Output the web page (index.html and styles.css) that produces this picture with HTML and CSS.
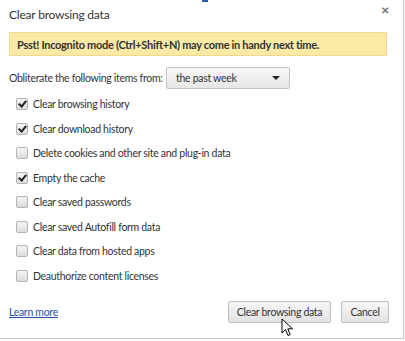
FILE: index.html
```html
<!DOCTYPE html>
<html>
<head>
<meta charset="utf-8">
<link rel="stylesheet" href="styles.css">
</head>
<body>
<div class="topmark"></div>
<div class="dialog">
  <div class="header">
    <span class="title">Clear browsing data</span>
    <span class="close">&#x2715;</span>
  </div>
  <div class="banner">Psst! Incognito mode (Ctrl+Shift+N) may come in handy next time.</div>
  <div class="period">
    <span class="period-label">Obliterate the following items from:</span>
    <div class="select"><span>the past week</span><span class="arrow"></span></div>
  </div>
  <ul class="items">
    <li><span class="cb checked"></span>Clear browsing history</li>
    <li><span class="cb checked"></span>Clear download history</li>
    <li><span class="cb"></span>Delete cookies and other site and plug-in data</li>
    <li><span class="cb checked"></span>Empty the cache</li>
    <li><span class="cb"></span>Clear saved passwords</li>
    <li><span class="cb"></span>Clear saved Autofill form data</li>
    <li><span class="cb"></span>Clear data from hosted apps</li>
    <li><span class="cb"></span>Deauthorize content licenses</li>
  </ul>
  <div class="footer">
    <a class="learn" href="#">Learn more</a>
    <div class="buttons">
      <button class="btn primary">Clear browsing data</button>
      <button class="btn cancel">Cancel</button>
    </div>
  </div>
  <svg class="cursor" width="13" height="20" viewBox="0 0 13 20"><path d="M1 1 L1 15 L4.5 11.5 L7 17.5 L9.2 16.6 L6.8 10.8 L11.5 10.8 Z" fill="#fff" stroke="#000" stroke-width="1" stroke-linejoin="miter"/></svg>
</div>
</body>
</html>
```
FILE: styles.css
```css
html, body { margin: 0; padding: 0; background: #fff; }
body { width: 405px; height: 341px; overflow: hidden; position: relative; font-family: Lato, "Noto Sans", sans-serif; color: #333; white-space: nowrap; }
.topmark { position: absolute; left: 202px; top: 0; width: 6px; height: 2px; background: #2a5db0; }
.dialog { position: relative; box-sizing: border-box; width: 404px; height: 339px; border-right: 1px solid #c8c8c8; border-bottom: 1px solid #c8c8c8; display: flex; flex-direction: column; padding: 0 16px 0 9px; }
.header { height: 30px; display: flex; align-items: center; justify-content: space-between; }
.title { font-size: 12px; letter-spacing: -0.2px; color: #333; margin-top: -2px; }
.close { font-size: 10px; color: #777; font-weight: bold; margin-top: -10px; margin-right: -2px; }
.banner { margin-top: 2px; height: 24px; box-sizing: border-box; border: 1px solid #f1d88e; background: #fbe9a6; font-size: 11px; letter-spacing: -0.3px; font-weight: bold; color: #333; display: flex; align-items: center; padding-left: 7px; width: 378px; }
.period { margin-top: 11px; height: 22px; display: flex; align-items: center; font-size: 10.5px; letter-spacing: -0.3px; }
.period-label { width: 157px; }
.select { box-sizing: border-box; width: 124px; height: 22px; border: 1px solid #c4c4c4; border-radius: 2px; background: linear-gradient(#f8f8f8, #e6e6e6); display: flex; align-items: center; justify-content: space-between; padding: 0 9px 0 9px; }
.arrow { width: 0; height: 0; border-left: 4px solid transparent; border-right: 4px solid transparent; border-top: 4px solid #222; }
.items { list-style: none; margin: 3px 0 0 0; padding: 0 0 0 7px; }
.items li { height: 24.5px; display: flex; align-items: center; font-size: 10.5px; letter-spacing: -0.3px; color: #333; }
.cb { box-sizing: border-box; width: 12px; height: 12px; border: 1px solid #b4b4b4; border-radius: 2px; background: linear-gradient(#f4f4f4, #dcdcdc); margin-right: 5px; position: relative; flex: none; }
.cb.checked::after { content: ""; position: absolute; left: 3px; top: 0px; width: 3px; height: 6px; border-right: 2px solid #222; border-bottom: 2px solid #222; transform: rotate(40deg); }
.footer { margin-top: auto; height: 39px; display: flex; align-items: flex-start; justify-content: space-between; padding-top: 2px; box-sizing: border-box; margin-right: -2px; }
.learn { font-size: 10.5px; letter-spacing: -0.3px; color: #2a4fa8; text-decoration: underline; margin-top: 5px; }
.buttons { display: flex; gap: 10px; }
.btn { box-sizing: border-box; height: 22px; border: 1px solid #bdbdbd; border-radius: 2px; background: linear-gradient(#f6f6f6, #e2e2e2); font-family: Lato, "Noto Sans", sans-serif; font-size: 10.5px; letter-spacing: -0.3px; color: #333; padding: 0; }
.btn.primary { width: 103px; }
.btn.cancel { width: 48px; }
.cursor { position: absolute; left: 281px; top: 318px; }
```
